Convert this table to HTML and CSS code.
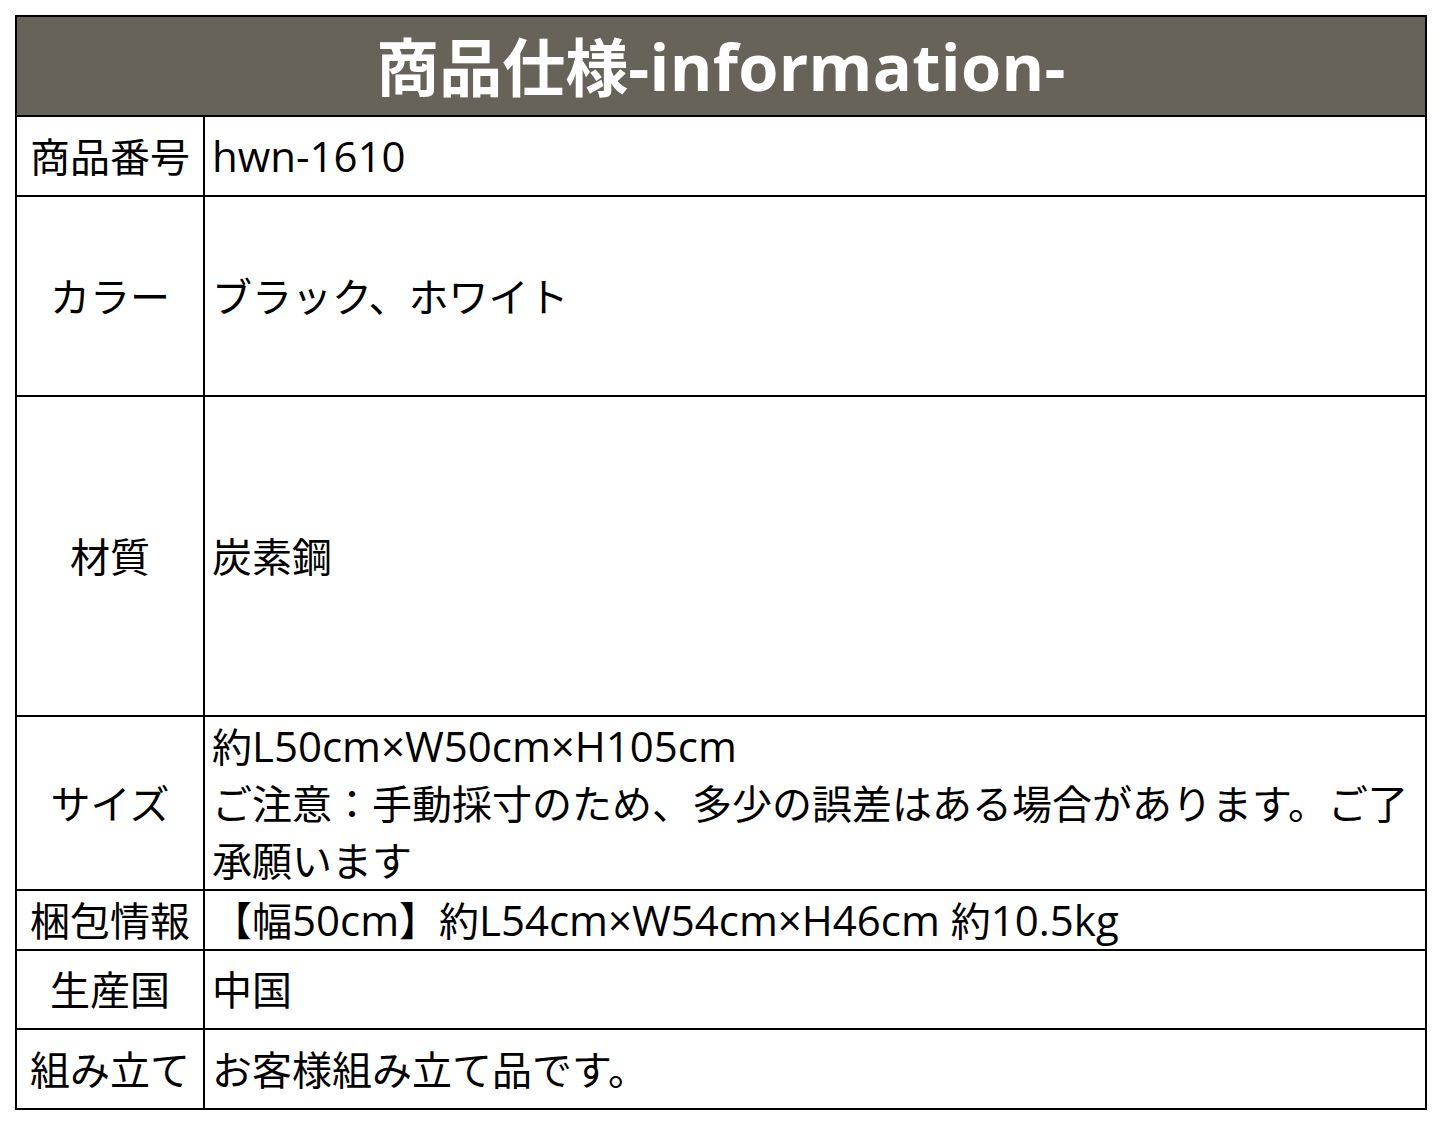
FILE: index.html
```html
<!DOCTYPE html>
<html lang="ja">
<head>
<meta charset="utf-8">
<title>商品仕様</title>
<link rel="stylesheet" href="styles.css">
</head>
<body>
<table class="spec">
  <colgroup><col class="col-label"><col class="col-value"></colgroup>
  <thead>
    <tr class="row-head"><th colspan="2" class="title">商品仕様<span class="lat-h">-information-</span></th></tr>
  </thead>
  <tbody>
    <tr class="r1"><td class="label">商品番号</td><td class="value"><span class="lat">hwn-1610</span></td></tr>
    <tr class="r2"><td class="label">カラー</td><td class="value">ブラック、ホワイト</td></tr>
    <tr class="r3"><td class="label">材質</td><td class="value">炭素鋼</td></tr>
    <tr class="r4"><td class="label">サイズ</td><td class="value">約<span class="lat">L50cm×W50cm×H105cm</span><br>ご注意：手動採寸のため、多少の誤差はある場合があります。ご了承願います</td></tr>
    <tr class="r5"><td class="label">梱包情報</td><td class="value nowrap">【幅<span class="lat">50cm</span>】約<span class="lat">L54cm×W54cm×H46cm </span>約<span class="lat">10.5kg</span></td></tr>
    <tr class="r6"><td class="label">生産国</td><td class="value">中国</td></tr>
    <tr class="r7"><td class="label">組み立て</td><td class="value">お客様組み立て品です。</td></tr>
  </tbody>
</table>
</body>
</html>
```
FILE: styles.css
```css
html, body {
  margin: 0;
  padding: 0;
  background: #ffffff;
}
body {
  padding: 15px 0 0 15px;
  font-family: "Open Sans", "Noto Sans CJK JP", sans-serif;
  color: #000;
}
.spec {
  border-collapse: separate;
  border-spacing: 0;
  width: 1412px;
  table-layout: fixed;
  border-top: 2px solid #000;
  border-left: 2px solid #000;
}
.col-label { width: 188px; }
.col-value { width: 1222px; }
.spec th, .spec td {
  border-right: 2px solid #000;
  border-bottom: 2px solid #000;
  padding: 0;
}
.title {
  background: #676358;
  color: #fff;
  height: 100px;
  font-size: 63px;
  font-weight: 700;
  text-align: center;
  vertical-align: middle;
  line-height: 1;
  padding-bottom: 2px;
  padding-left: 2px;
  box-sizing: border-box;
}
.lat-h {
  font-size: 65px;
  letter-spacing: 0.3px;
}
.label {
  text-align: center;
  font-size: 40px;
  vertical-align: middle;
  line-height: 57px;
  white-space: nowrap;
}
.value {
  font-size: 40px;
  line-height: 57px;
  vertical-align: middle;
  text-align: left;
}
.spec td.value {
  padding-left: 7px;
}
.lat {
  font-size: 42px;
}
.nowrap {
  white-space: nowrap;
}
.r1 td { height: 78px; }
.r2 td { height: 198px; }
.r3 td { height: 318px; }
.r4 td { height: 171px; }
.r5 td { height: 57px; }
.r6 td { height: 77px; }
.r7 td { height: 78px; }
```
